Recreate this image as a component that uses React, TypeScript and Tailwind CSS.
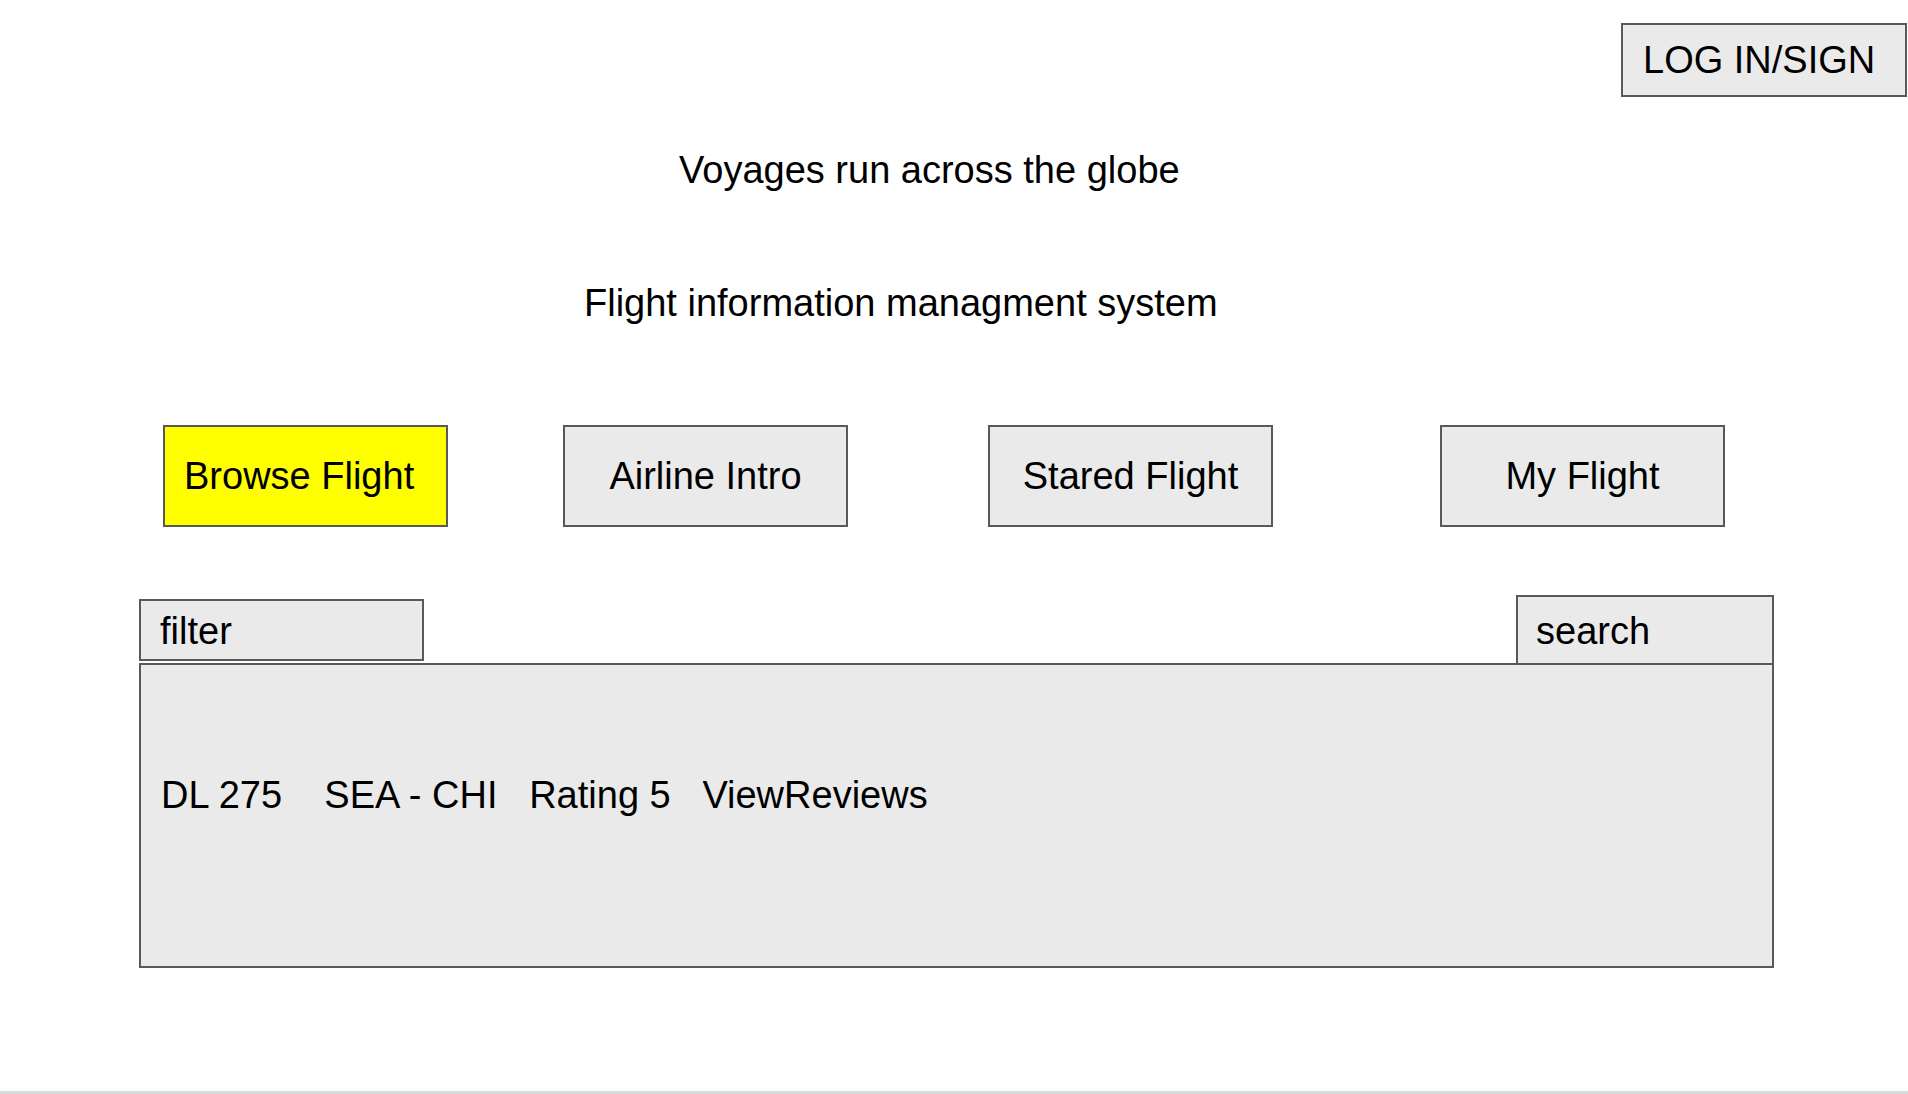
export default function App() {
  const font = { fontFamily: '"Liberation Sans", Arial, sans-serif' }
  const box = 'border-2 border-[#595959] bg-[#eaeaea]'

  return (
    <div
      className="flex min-h-[1094px] w-full flex-col bg-white text-[38px] leading-[42px] text-black"
      style={font}
    >
      <div className="flex justify-end pt-[23px] pr-[1px]">
        <div className={`${box} h-[74px] w-[286px] pt-[14px] pl-[20px]`}>LOG IN/SIGN</div>
      </div>

      <h1 className="mt-[52px] pl-[679px] text-[38px] font-normal">Voyages run across the globe</h1>
      <h2 className="mt-[91px] pl-[584px] text-[38px] font-normal">Flight information managment system</h2>

      <div className="mt-[101px] flex pl-[163px]">
        <button className="flex h-[102px] w-[285px] items-center border-2 border-[#595959] bg-[#ffff00] pl-[19px]">
          Browse Flight
        </button>
        <button className={`${box} ml-[115px] flex h-[102px] w-[285px] items-center justify-center`}>
          Airline Intro
        </button>
        <button className={`${box} ml-[140px] flex h-[102px] w-[285px] items-center justify-center`}>
          Stared Flight
        </button>
        <button className={`${box} ml-[167px] flex h-[102px] w-[285px] items-center justify-center`}>
          My Flight
        </button>
      </div>

      <div className="mt-[68px] flex w-[1774px] items-end justify-between pl-[139px]">
        <div className={`${box} mb-[2px] h-[62px] w-[285px] pt-[9px] pl-[19px]`}>filter</div>
        <div className="h-[68px] w-[258px] border-2 border-b-0 border-[#595959] bg-[#eaeaea] pt-[13px] pl-[18px]">
          search
        </div>
      </div>

      <div className="pl-[139px]">
        <div className={`${box} h-[305px] w-[1635px] pt-[109px] pl-[20px] whitespace-pre`}>
          DL 275    SEA - CHI   Rating 5   ViewReviews
        </div>
      </div>

      <div className="mt-auto h-[3px] w-full bg-[#d8dbdb]" />
    </div>
  )
}
